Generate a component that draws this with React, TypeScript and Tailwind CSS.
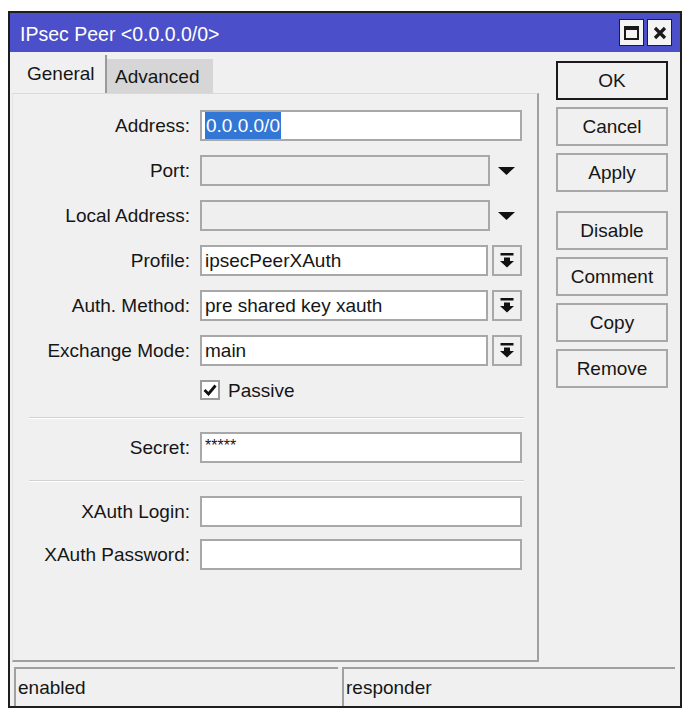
import type { ReactNode } from "react";
import clsx from "clsx";

// Winbox-style "IPsec Peer" edit window.

const font = "font-['Liberation_Sans',Arial,sans-serif]";

function TitleButton({ children }: { children: ReactNode }) {
  return (
    <div className="grid h-[27px] w-[25px] place-items-center border border-[#1e1e1e] bg-[#f4f4f4]">
      {children}
    </div>
  );
}

function Row({ label, children, className }: { label: string; children: ReactNode; className?: string }) {
  return (
    <div className={clsx("flex h-[31px] items-center", className)}>
      <span className="w-[177px] text-right">{label}</span>
      <div className="ml-[10px] flex h-full items-center">{children}</div>
    </div>
  );
}

function Field({ children, width = "w-[322px]", disabled }: { children?: ReactNode; width?: string; disabled?: boolean }) {
  return (
    <div
      className={clsx(
        "flex h-full items-center border-2 border-[#a8a8a8] pl-[3px]",
        width,
        disabled ? "bg-[#efefef]" : "bg-white",
      )}
    >
      {children}
    </div>
  );
}

function DropArrow() {
  return (
    <div className="ml-[8px] flex w-[24px] items-center">
      <svg width="17" height="8" viewBox="0 0 17 8">
        <polygon points="0,0 17,0 8.5,8" fill="#111" />
      </svg>
    </div>
  );
}

function ListButton() {
  return (
    <div className="ml-[4px] grid h-full w-[30px] place-items-center border-2 border-[#a8a8a8] bg-[#f0f0f0]">
      <svg width="14" height="15" viewBox="0 0 14 15">
        <rect x="0.5" y="0" width="13" height="2.5" fill="#111" />
        <rect x="4" y="4.5" width="6" height="3.5" fill="#111" />
        <polygon points="0,8 14,8 7,14.5" fill="#111" />
      </svg>
    </div>
  );
}

function Separator() {
  return <div className="ml-[16px] h-[2px] w-[495px] border-t border-b border-t-[#d2d2d2] border-b-white" />;
}

function ActionButton({ label, primary }: { label: string; primary?: boolean }) {
  return (
    <div
      className={clsx(
        "grid h-[39px] place-items-center border-2 bg-[#f0f0f0]",
        primary ? "border-[#1a1a1a]" : "border-[#a8a8a8]",
      )}
    >
      {label}
    </div>
  );
}

export default function App() {
  return (
    <div className={clsx("min-h-screen bg-white pl-[8px] pt-[11px] text-[19px] leading-none text-[#161616]", font)}>
      <div className="flex h-[697px] w-[674px] flex-col border-2 border-[#1e1e1e] bg-[#f0f0f0]">
        {/* title bar */}
        <div className="flex h-[39px] items-center justify-between bg-[#4b4fc9] pl-[10px] pr-[8px]">
          <span className="pt-[4px] text-[19.5px] text-white">IPsec Peer &lt;0.0.0.0/0&gt;</span>
          <div className="flex gap-[3px]">
            <TitleButton>
              <svg width="15" height="14" viewBox="0 0 15 14">
                <rect x="1" y="1" width="13" height="12" fill="none" stroke="#1a1a1a" strokeWidth="2" />
                <rect x="1" y="1" width="13" height="3" fill="#1a1a1a" />
              </svg>
            </TitleButton>
            <TitleButton>
              <svg width="14" height="14" viewBox="0 0 14 14">
                <path d="M2 2 L12 12 M12 2 L2 12" stroke="#1a1a1a" strokeWidth="3.2" />
              </svg>
            </TitleButton>
          </div>
        </div>

        <div className="flex h-[610px]">
          {/* tabs + General page */}
          <div className="flex w-[530px] flex-col">
            <div className="flex h-[41px] items-end pl-[2px]">
              <div className="flex h-[38px] w-[95px] items-center border-r-2 border-[#9a9a9a] pl-[15px] pb-[2px]">
                General
              </div>
              <div className="flex h-[34px] w-[106px] items-center bg-[#d6d6d6] pl-[8px]">Advanced</div>
            </div>
            <div className="ml-[2px] flex h-[569px] w-[527px] flex-col border-t border-r-2 border-b-2 border-l border-t-[#dadada] border-r-[#a0a0a0] border-b-[#a0a0a0] border-l-[#e4e4e4] pt-[16px]">
              <Row label="Address:">
                <Field>
                  <span className="bg-[#3277d6] px-[1px] py-[4px] text-white">0.0.0.0/0</span>
                </Field>
              </Row>
              <Row label="Port:" className="mt-[14px]">
                <Field width="w-[290px]" disabled />
                <DropArrow />
              </Row>
              <Row label="Local Address:" className="mt-[14px]">
                <Field width="w-[290px]" disabled />
                <DropArrow />
              </Row>
              <Row label="Profile:" className="mt-[14px]">
                <Field width="w-[288px]">ipsecPeerXAuth</Field>
                <ListButton />
              </Row>
              <Row label="Auth. Method:" className="mt-[14px]">
                <Field width="w-[288px]">pre shared key xauth</Field>
                <ListButton />
              </Row>
              <Row label="Exchange Mode:" className="mt-[14px]">
                <Field width="w-[288px]">main</Field>
                <ListButton />
              </Row>
              <div className="mt-[14px] ml-[187px] flex h-[20px] items-center">
                <div className="grid h-[20px] w-[20px] place-items-center border-2 border-[#9c9c9c] bg-white">
                  <svg width="14" height="12" viewBox="0 0 14 12">
                    <path d="M1.5 6 L5.5 10 L12.5 1.5" fill="none" stroke="#111" strokeWidth="2.8" />
                  </svg>
                </div>
                <span className="ml-[8px]">Passive</span>
              </div>
              <div className="mt-[17px]">
                <Separator />
              </div>
              <Row label="Secret:" className="mt-[13px]">
                <Field>
                  <span className="self-start pt-[4px] text-[16px]">*****</span>
                </Field>
              </Row>
              <div className="mt-[17px]">
                <Separator />
              </div>
              <Row label="XAuth Login:" className="mt-[14px]">
                <Field />
              </Row>
              <Row label="XAuth Password:" className="mt-[12px]">
                <Field />
              </Row>
            </div>
          </div>

          {/* action buttons */}
          <div className="ml-[16px] flex w-[112px] flex-col gap-[7px] pt-[9px]">
            <ActionButton label="OK" primary />
            <ActionButton label="Cancel" />
            <ActionButton label="Apply" />
            <div className="mt-[12px]">
              <ActionButton label="Disable" />
            </div>
            <ActionButton label="Comment" />
            <ActionButton label="Copy" />
            <ActionButton label="Remove" />
          </div>
        </div>

        {/* status bar */}
        <div className="mt-[5px] flex h-[39px] pl-[4px] pr-[5px]">
          <div className="flex w-[324px] items-center border-t-2 border-l-2 border-[#a0a0a0] pl-[2px]">enabled</div>
          <div className="ml-[4px] flex flex-1 items-center border-t-2 border-l-2 border-[#a0a0a0] pl-[2px]">
            responder
          </div>
        </div>
      </div>
    </div>
  );
}
